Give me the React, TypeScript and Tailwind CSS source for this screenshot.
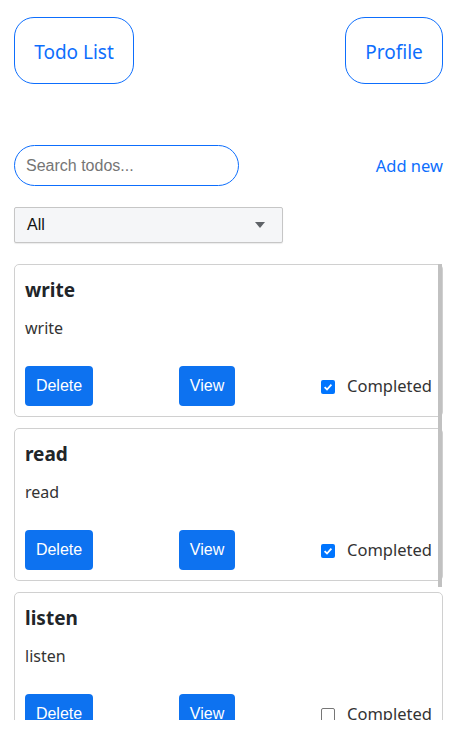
import React from "react";

const todos = [
  { title: "write", body: "write", done: true },
  { title: "read", body: "read", done: true },
  { title: "listen", body: "listen", done: false },
];

function Check({ checked }: { checked: boolean }) {
  return checked ? (
    <span className="flex h-[14px] w-[14px] items-center justify-center rounded-[2px] bg-[#0075ff]">
      <svg width="10" height="10" viewBox="0 0 10 10">
        <path d="M1.6 5.2 L4 7.5 L8.4 2.6" fill="none" stroke="white" strokeWidth="1.8" />
      </svg>
    </span>
  ) : (
    <span className="h-[14px] w-[14px] rounded-[2px] border border-[#767676] bg-white" />
  );
}

export default function App() {
  const seg = { fontFamily: '"Noto Sans", "Open Sans", sans-serif' };
  const arial = { fontFamily: '"Liberation Sans", Arial, sans-serif' };
  return (
    <div className="w-[459px] h-[737px] bg-white overflow-hidden" style={seg}>
      <div className="mx-[14px] w-[429px]">
        <div className="flex justify-between pt-[17px]">
          <button className="h-[67px] w-[120px] rounded-[20px] border border-[#0d6efd] pt-[3px] text-[19px] text-[#0d6efd]">
            Todo List
          </button>
          <button className="h-[67px] w-[98px] rounded-[20px] border border-[#0d6efd] pt-[3px] text-[19px] text-[#0d6efd]">
            Profile
          </button>
        </div>

        <div className="mt-[61px] flex h-[41px] items-center justify-between">
          <div className="flex h-[41px] w-[225px] items-center rounded-full border border-[#0d6efd] px-[11px]">
            <span className="text-[16px] text-[#757575]" style={arial}>
              Search todos...
            </span>
          </div>
          <a className="pt-[2px] text-[16.5px] text-[#0d6efd]">Add new</a>
        </div>

        <div
          className="mt-[21px] flex h-[36px] w-[269px] items-center justify-between rounded-[2px] border border-[#c6c6c6] bg-[#f5f6f8] pl-[12px] pr-[17px] shadow-[0_1px_1px_rgba(0,0,0,0.08)]"
          style={arial}
        >
          <span className="text-[16px] text-[#111]">All</span>
          <svg width="10" height="6" viewBox="0 0 10 6">
            <path d="M0 0 L10 0 L5 6 Z" fill="#5f6368" />
          </svg>
        </div>

        <div className="relative mt-[21px] h-[456px] overflow-hidden">
          <div className="flex flex-col gap-[11px]">
            {todos.map((t) => (
              <div
                key={t.title}
                className="h-[153px] rounded-[5px] border border-[#d0d0d0] px-[10px] pt-[12px] pb-[10px] flex flex-col"
              >
                <div className="text-[19px] font-bold leading-[26px] text-[#212529]">{t.title}</div>
                <div className="mt-[14px] text-[16px] leading-[22px] text-[#333]">{t.body}</div>
                <div className="mt-auto flex items-center justify-between">
                  <button
                    className="h-[40px] w-[68px] rounded-[4px] bg-[#0d72f0] text-[16px] text-white"
                    style={arial}
                  >
                    Delete
                  </button>
                  <button
                    className="h-[40px] w-[56px] rounded-[4px] bg-[#0d72f0] text-[16px] text-white"
                    style={arial}
                  >
                    View
                  </button>
                  <div className="flex items-center gap-[12px] pt-[1px]">
                    <Check checked={t.done} />
                    <span className="text-[16.5px] text-[#333]">Completed</span>
                  </div>
                </div>
              </div>
            ))}
          </div>
          <div className="absolute right-[1px] top-0 h-[323px] w-[4px] bg-[#c1c1c1]" />
        </div>
      </div>
    </div>
  );
}
